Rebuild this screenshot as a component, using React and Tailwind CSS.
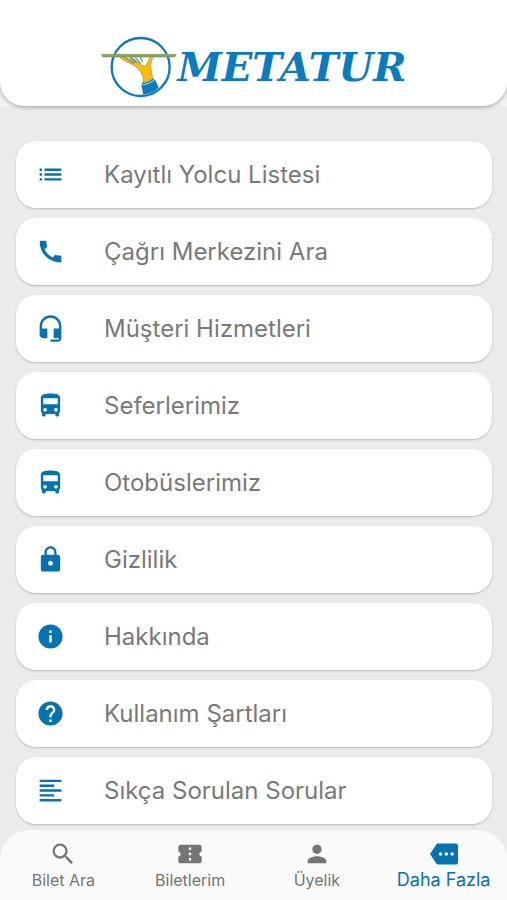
import { useState } from 'react';
import clsx from 'clsx';
import {
    MdCall,
    MdConfirmationNumber,
    MdDirectionsBus,
    MdFormatAlignLeft,
    MdHelp,
    MdInfo,
    MdList,
    MdLock,
    MdMore,
    MdPerson,
    MdSearch,
} from 'react-icons/md';

// Headset with solid ear pads
const HeadsetIcon = ({ size, className }) => (
    <svg viewBox="0 0 24 24" width={size} height={size} fill="currentColor" className={className} aria-hidden="true">
        <path d="M12 1c-4.97 0-9 4.03-9 9v7c0 1.66 1.34 3 3 3h3.4v-8H5v-2c0-3.87 3.13-7 7-7s7 3.13 7 7v2h-4.4v8H19v1h-7v2h6c1.66 0 3-1.34 3-3V10c0-4.97-4.03-9-9-9z" />
    </svg>
);

const menuItems = [
    { label: 'Kayıtlı Yolcu Listesi', icon: MdList },
    { label: 'Çağrı Merkezini Ara', icon: MdCall },
    { label: 'Müşteri Hizmetleri', icon: HeadsetIcon },
    { label: 'Seferlerimiz', icon: MdDirectionsBus },
    { label: 'Otobüslerimiz', icon: MdDirectionsBus },
    { label: 'Gizlilik', icon: MdLock },
    { label: 'Hakkında', icon: MdInfo },
    { label: 'Kullanım Şartları', icon: MdHelp },
    { label: 'Sıkça Sorulan Sorular', icon: MdFormatAlignLeft },
];

const tabs = [
    { label: 'Bilet Ara', icon: MdSearch },
    { label: 'Biletlerim', icon: MdConfirmationNumber },
    { label: 'Üyelik', icon: MdPerson },
    { label: 'Daha Fazla', icon: MdMore },
];

// Hand carrying a tray inside a ring
const LogoMark = () => (
    <svg viewBox="28 32 231 186" width="77" height="62" fill="none" aria-hidden="true">
        <circle cx="150" cy="125" r="87" stroke="#0b7abf" strokeWidth="7" />
        <path
            d="M88 96 C96 107 112 110 124 117 C138 125 148 134 153 145 C157 153 159 160 157 172 L187 160 C183 148 182 136 180 122 C180 112 184 104 187 96 L179 94 C175 101 172 110 166 120 C160 123 154 121 148 116 L124 97 L116 98 L130 113 L106 97 Z"
            fill="#fbbc09"
            stroke="#8f8f3c"
            strokeWidth="2"
        />
        <path d="M104 97 L130 114 M120 96 L139 114 M134 96 L150 115 M148 96 L156 110" stroke="#5f9a92" strokeWidth="4" />
        <path d="M152 179 C166 178 182 172 193 163 L204 186 C194 198 178 206 158 208 Z" fill="#0b7abf" />
        <path d="M154 175 C166 174 180 169 189 161" stroke="#0b7abf" strokeWidth="5" />
        <path d="M156 179 C168 178 180 173 190 166" stroke="#d9b23a" strokeWidth="2" />
        <path d="M31 86 H258 L253 96 H36 Z" fill="#8fa65a" />
        <path d="M36 94 H252" stroke="#6d9080" strokeWidth="2" />
    </svg>
);

const Header = () => (
    <header className="bg-[#f4f4f4]">
        <div className="flex h-[106px] items-end justify-center rounded-b-3xl bg-white pb-2 shadow-[0_1px_4px_rgba(0,0,0,0.35)]">
            <a href="#" className="flex items-center">
                <LogoMark />
                <span className="font-['DejaVu_Serif',serif] text-[40px] leading-[62px] font-bold text-[#0b7abf] italic">
                    METATUR
                </span>
            </a>
        </div>
    </header>
);

const MenuItem = ({ label, icon: Icon }) => (
    <li>
        <button
            type="button"
            className="flex h-[67px] w-full items-center gap-[39px] rounded-[20px] bg-white pl-5 text-left text-2xl text-[#797979] shadow-[0_1px_2px_rgba(0,0,0,0.22)]"
        >
            <Icon size={29} className="shrink-0 text-[#0672b0]" />
            <span>{label}</span>
        </button>
    </li>
);

const App = () => {
    const [activeTab, setActiveTab] = useState('Daha Fazla');

    return (
        <div className="flex min-h-screen flex-col bg-[#ebebeb] font-['Inter',sans-serif]">
            <Header />

            <main className="flex-1 pt-[35px] pr-[15px] pb-1.5 pl-4">
                <ul className="space-y-2.5">
                    {menuItems.map((item) => (
                        <MenuItem key={item.label} {...item} />
                    ))}
                </ul>
            </main>

            <nav className="sticky bottom-0 grid h-[70px] grid-cols-4 rounded-t-[30px] bg-[#fafafa]">
                {tabs.map(({ label, icon: Icon }) => (
                    <button
                        key={label}
                        type="button"
                        onClick={() => setActiveTab(label)}
                        className={clsx(
                            'flex flex-col items-center pt-2.5',
                            activeTab === label ? 'text-lg/6 text-[#0672b0]' : 'text-base/6 text-[#757575]'
                        )}
                    >
                        <Icon size={28} />
                        <span className="whitespace-nowrap">{label}</span>
                    </button>
                ))}
            </nav>
        </div>
    );
};

export default App;
